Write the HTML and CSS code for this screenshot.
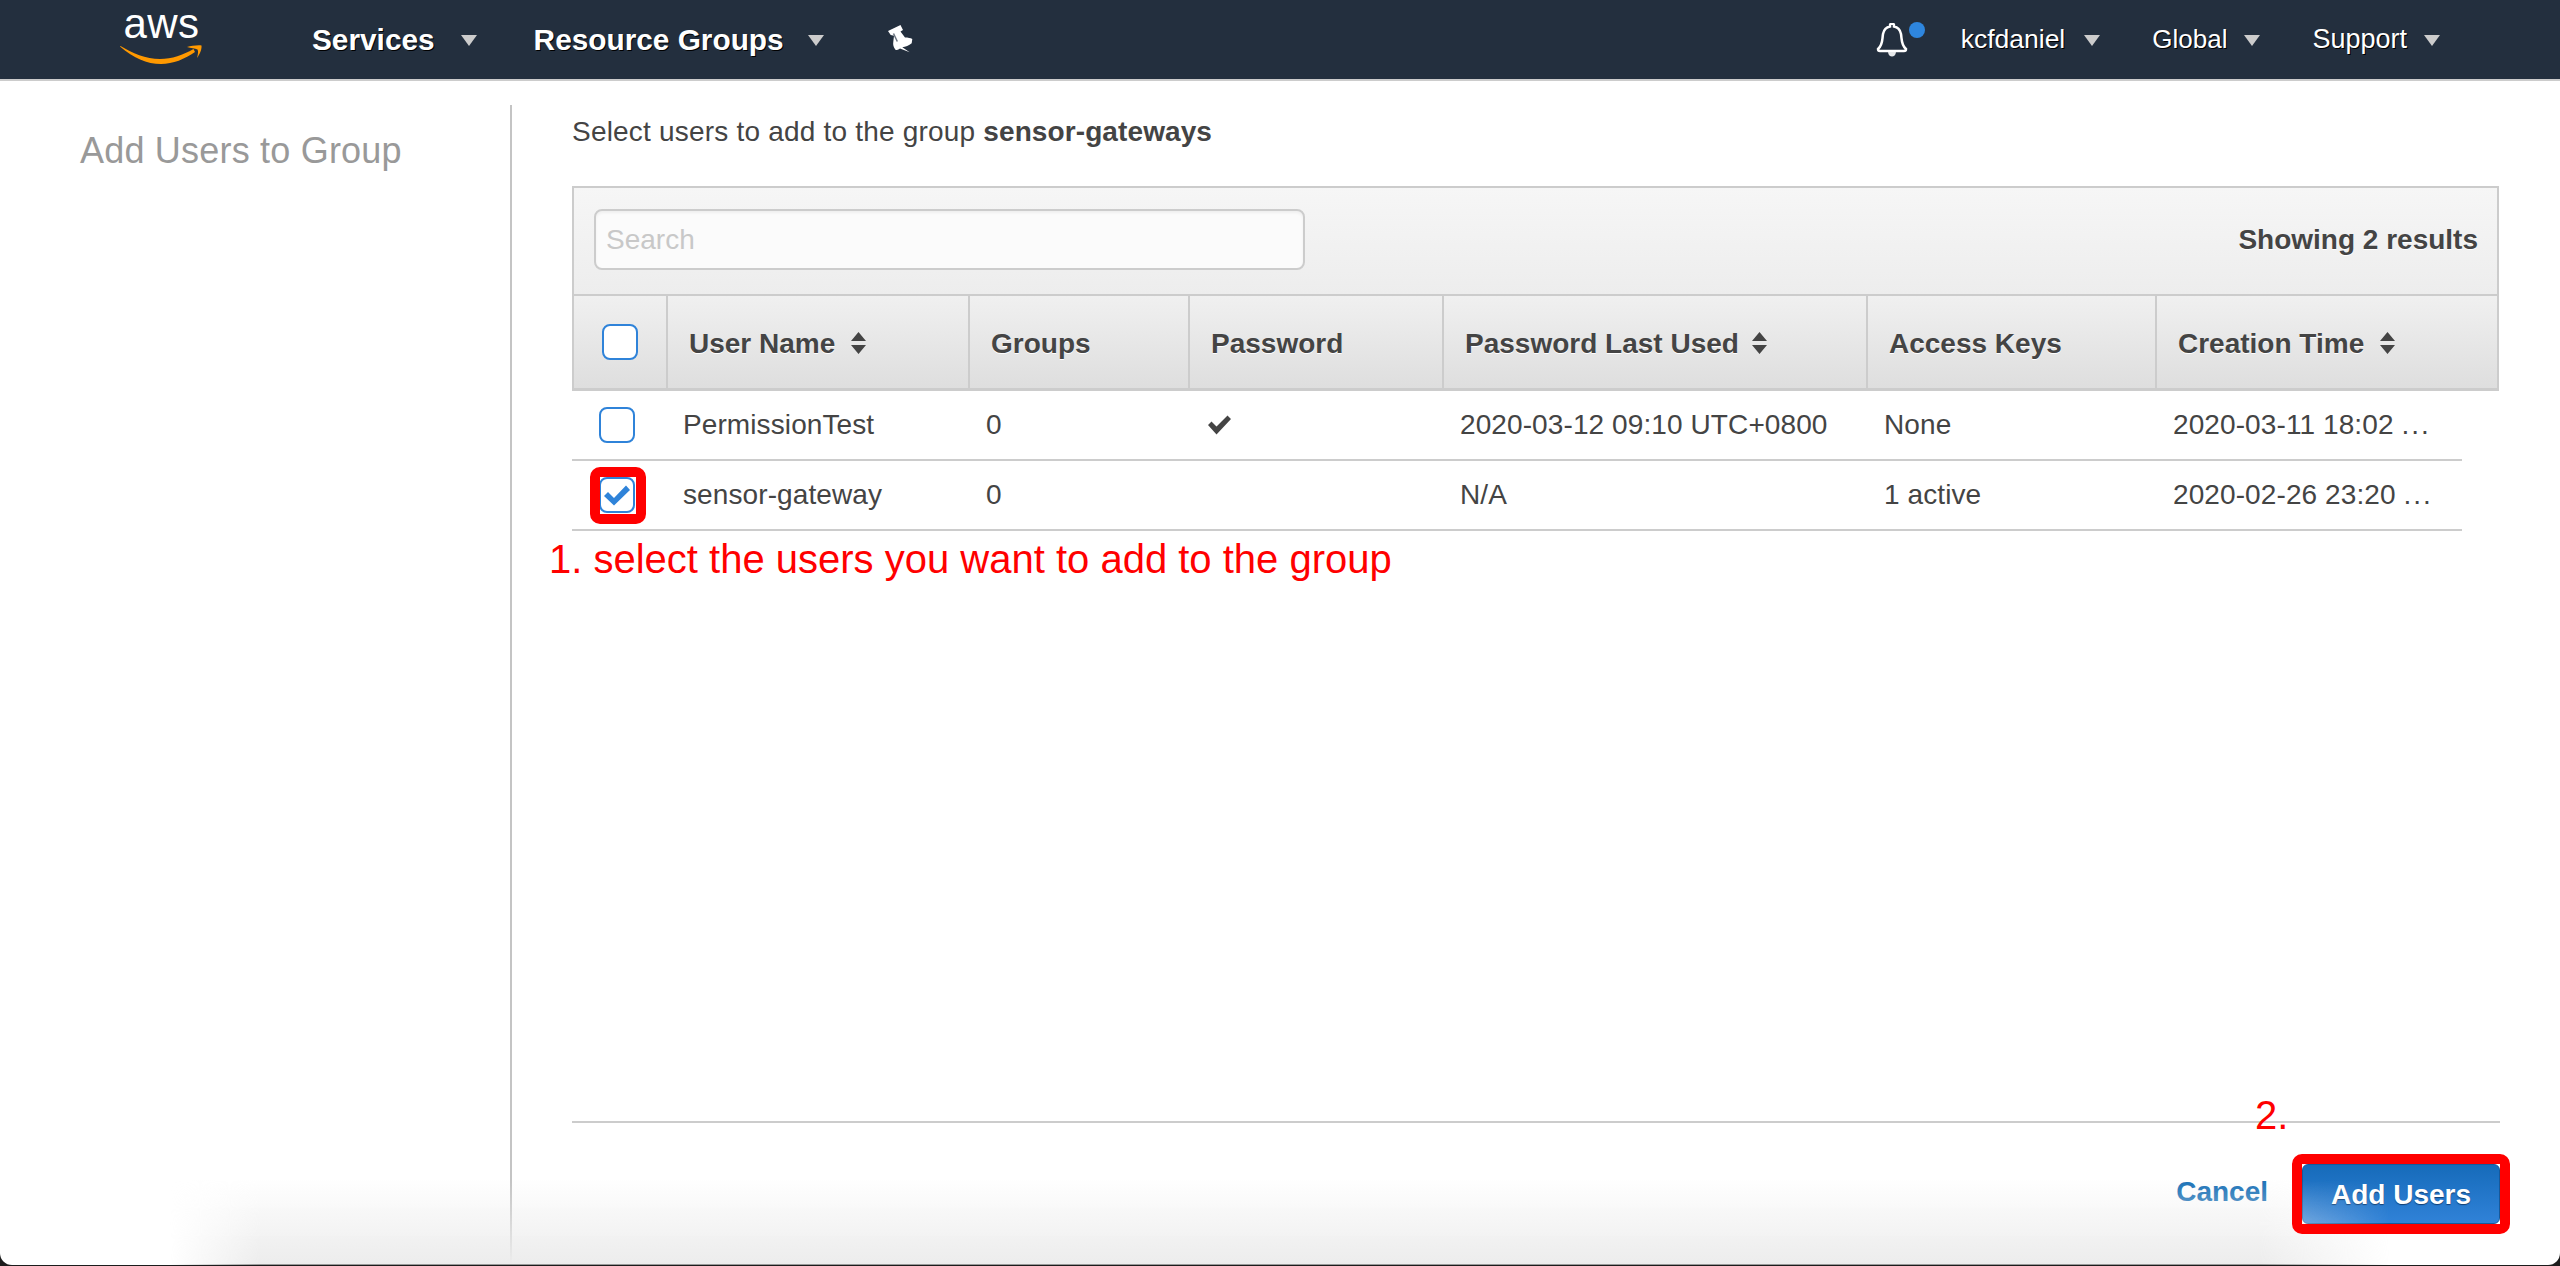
FILE: index.html
```html
<!DOCTYPE html>
<html lang="en">
<head>
<meta charset="utf-8">
<title>Add Users to Group</title>
<link rel="stylesheet" href="styles.css">
</head>
<body>
<div class="page">
  <header class="nav">
    <a class="logo">
      <svg class="logo-svg" width="95" height="70" viewBox="0 0 95 70">
        <text class="logo-text" x="46.500" y="36" text-anchor="middle">aws</text>
        <path d="M5 44.500 C18 56 32 62 46 62 C58 62 70 57 80 50 L78.500 47 C68 53 57 57 45 57 C31 57 17 51 5.500 44 Z" fill="#f90"/>
        <path d="M72 45 C76 44 82 43 86.500 43.500 C87 47 85 52 82 56 C83 52 83.500 49 82.500 47.500 C80 46.500 76 46 72 45Z" fill="#f90"/>
      </svg>
    </a>
    <a class="nav-item nav-bold services">Services<i class="caret"></i></a>
    <a class="nav-item nav-bold groups">Resource Groups<i class="caret"></i></a>
    <svg class="pin" width="30" height="32" viewBox="0 0 30 32">
      <path d="M4 9 L16.500 3 L19 8 L16.500 9.500 L21 15.500 C24 15.500 26.500 16 28.300 17 L27.700 21.300 C25 23.500 21.500 25 18.300 25.300 L25.700 30.300 L16 26.500 C14.500 27.500 13 28 11.700 28 C9.500 25.500 8.800 22.500 9.300 19.700 L10 13.700 L6.700 13 Z" fill="#fff"/>
      <path d="M9.500 11.500 L13.300 19.500" stroke="#6b7480" stroke-width="1.500" fill="none"/>
    </svg>
    <div class="nav-spacer"></div>
    <div class="bell">
      <svg width="32" height="35" viewBox="0 0 32 35">
        <path d="M2 26 C7 22 6 17 7 11 C8 6 11 4 14 3.500 L14 2 C14 0.500 18 0.500 18 2 L18 3.500 C21 4 24 6 25 11 C26 17 25 22 30 26 C30 27.500 29 28 28 28 L4 28 C3 28 2 27.500 2 26Z" fill="none" stroke="#fff" stroke-width="2.500"/>
        <path d="M12 29 C12.500 35 19.500 35 20 29Z" fill="#e6e8ea"/>
      </svg>
      <i class="bell-dot"></i>
    </div>
    <a class="nav-item user">kcfdaniel<i class="caret"></i></a>
    <a class="nav-item region">Global<i class="caret"></i></a>
    <a class="nav-item support">Support<i class="caret"></i></a>
  </header>

  <main class="main">
    <aside class="side">
      <h1 class="side-title">Add Users to Group</h1>
    </aside>
    <section class="content">
      <p class="lead">Select users to add to the group <b>sensor-gateways</b></p>

      <div class="grid-box">
        <div class="toolbar">
          <input class="search" type="text" placeholder="Search">
          <span class="count">Showing 2 results</span>
        </div>
        <div class="head-row">
          <div class="hc hc-check"><span class="box"></span></div>
          <div class="hc">User Name<svg class="sort" width="17" height="22" viewBox="0 0 17 22"><path d="M8.500 0 L16 9 L1 9Z M8.500 22 L16 13 L1 13Z"/></svg></div>
          <div class="hc">Groups</div>
          <div class="hc">Password</div>
          <div class="hc">Password Last Used<svg class="sort sort-tight" width="17" height="22" viewBox="0 0 17 22"><path d="M8.500 0 L16 9 L1 9Z M8.500 22 L16 13 L1 13Z"/></svg></div>
          <div class="hc">Access Keys</div>
          <div class="hc hc-last">Creation Time<svg class="sort" width="17" height="22" viewBox="0 0 17 22"><path d="M8.500 0 L16 9 L1 9Z M8.500 22 L16 13 L1 13Z"/></svg></div>
        </div>
      </div>

      <div class="rows">
        <div class="row">
          <div class="cell cell-check"><span class="box"></span></div>
          <div class="cell">PermissionTest</div>
          <div class="cell">0</div>
          <div class="cell"><svg class="tick" width="25" height="20" viewBox="0 0 25 20"><path d="M1 10 L4.500 6.500 L9.500 11.500 L20.500 0.500 L24 4 L9.500 19.500Z"/></svg></div>
          <div class="cell">2020-03-12 09:10 UTC+0800</div>
          <div class="cell">None</div>
          <div class="cell">2020-03-11 18:02 <span class="dots">...</span></div>
        </div>
        <div class="row">
          <div class="cell cell-check"><span class="box"><svg width="28" height="21" viewBox="0 0 28 21"><path d="M1 11 L5 7 L11 13 L23 0.500 L27 5 L11 20.500Z" fill="#2f83d9"/></svg></span></div>
          <div class="cell">sensor-gateway</div>
          <div class="cell">0</div>
          <div class="cell"></div>
          <div class="cell">N/A</div>
          <div class="cell">1 active</div>
          <div class="cell">2020-02-26 23:20 <span class="dots">...</span></div>
        </div>
      </div>

      <div class="fill"></div>

      <footer class="actions">
        <a class="cancel">Cancel</a>
        <button class="primary" type="button">Add Users</button>
      </footer>
    </section>
  </main>

  <div class="floor-shadow"></div>
  <div class="mark mark-check"></div>
  <div class="mark mark-button"></div>
  <div class="note note-one">1. select the users you want to add to the group</div>
  <div class="note note-two">2.</div>
</div>
</body>
</html>
```
FILE: styles.css
```css
* { box-sizing: border-box; }
html, body { margin: 0; padding: 0; height: 100%; }
body {
  background: #1c1c1c;
  font-family: "Liberation Sans", Arial, sans-serif;
  font-size: 28px;
  color: #444;
  overflow: hidden;
}
.page {
  position: relative;
  width: 2560px;
  height: 1265px;
  background: #fff;
  border-radius: 0 0 12px 12px;
  overflow: hidden;
  display: flex;
  flex-direction: column;
}

/* top bar */
.nav {
  height: 81px;
  flex: none;
  background: #232f3e;
  border-bottom: 2px solid #ccc;
  display: flex;
  align-items: center;
  color: #fff;
  padding-left: 115px;
}
.logo { display: flex; align-self: flex-start; margin-top: 2px; width: 95px; }
.logo-svg { overflow: visible; }
.logo-text {
  font-family: "Liberation Sans", Arial, sans-serif;
  font-size: 42px;
  fill: #fff;
  letter-spacing: 0.5px;
}
.nav-item {
  display: flex;
  align-items: center;
  text-shadow: 1px 1px 0 #000;
  white-space: nowrap;
}
.nav-bold { font-weight: 700; font-size: 29.8px; }
.caret {
  width: 0;
  height: 0;
  margin-left: 24px;
  border-left: 8.500px solid transparent;
  border-right: 8.500px solid transparent;
  border-top: 11px solid #ccc;
  margin-top: 2px;
}
.services { margin-left: 102px; }
.services .caret { margin-left: 26px; }
.groups { margin-left: 57px; }
.groups .caret { margin-left: 24px; }
.pin { margin-left: 60px; margin-top: -3px; }
.nav-spacer { flex: 1; }
.bell { position: relative; width: 50px; height: 35px; margin-top: 1px; }
.bell-dot {
  position: absolute;
  left: 33px;
  top: -1px;
  width: 16px;
  height: 16px;
  border-radius: 50%;
  background: #2e86de;
}
.user { margin-left: 35px; font-size: 26.500px; }
.region { margin-left: 52px; font-size: 26px; }
.support { margin-left: 52px; font-size: 27px; margin-right: 120px; }
.user .caret, .region .caret, .support .caret { margin-left: 17px; }
.user .caret { margin-left: 19px; }

/* layout */
.main { flex: 1; display: flex; min-height: 0; }
.side {
  width: 512px;
  flex: none;
  margin-top: 24px;
  padding: 25px 0 0 80px;
  border-right: 2px solid #c4c4c4;
}
.side-title {
  margin: 0;
  font-size: 36px;
  line-height: 42px;
  font-weight: 400;
  letter-spacing: 0.2px;
  color: #999;
}
.content {
  flex: 1;
  min-width: 0;
  padding: 0 60px 0 60px;
  display: flex;
  flex-direction: column;
}
.lead { margin: 0; padding-top: 34px; height: 105px; line-height: 34px; letter-spacing: 0.2px; }
.lead b { letter-spacing: 0.1px; }

/* grid */
.grid-box { border: 2px solid #ccc; border-bottom-width: 3px; width: 1927px; }
.toolbar {
  height: 108px;
  border-bottom: 2px solid #ccc;
  background: linear-gradient(#f6f6f6, #ededed);
  display: flex;
  align-items: center;
  justify-content: space-between;
  padding: 0 19px 4px 20px;
}
.search {
  width: 711px;
  height: 61px;
  padding: 2px 10px 0;
  border: 2px solid #ccc;
  border-radius: 8px;
  background: #fbfbfb;
  font: 28px "Liberation Sans", Arial, sans-serif;
  box-shadow: inset 0 2px 3px rgba(0, 0, 0, 0.05);
  outline: none;
}
.search::placeholder { color: #c8c8c8; opacity: 1; }
.count { font-weight: 700; text-shadow: 0 1px 0 #fff; margin-top: 1px; }
.head-row {
  display: grid;
  grid-template-columns: 94px 302px 220px 254px 424px 289px 1fr;
  height: 92px;
  background: linear-gradient(#f0f0f0, #dedede);
}
.hc {
  display: flex;
  align-items: center;
  gap: 15px;
  padding: 3px 0 0 21px;
  font-weight: 700;
  border-right: 2px solid #ccc;
  text-shadow: 0 1px 0 #fff;
  white-space: nowrap;
}
.hc-check { padding: 0 0 0 28px; }
.hc-last { border-right: 0; }
.sort { fill: #444; margin-top: -2px; }
.sort-tight { margin-left: -3px; }

.box {
  display: flex;
  align-items: center;
  justify-content: center;
  width: 36px;
  height: 36px;
  border: 2px solid #2f83d9;
  border-radius: 8px;
  background: #fff;
}
.rows { width: 1890px; }
.row {
  display: grid;
  grid-template-columns: 93px 303px 222px 252px 424px 289px 1fr;
  height: 70px;
  border-bottom: 2px solid #ccc;
  letter-spacing: 0.1px;
}
.cell {
  display: flex;
  align-items: center;
  padding-left: 18px;
  white-space: pre;
}
.cell-check { padding-left: 27px; }
.tick { fill: #444; margin-left: -1px; }
.dots { letter-spacing: 2px; }

.fill { flex: 1; }

/* footer */
.actions {
  height: 144px;
  border-top: 2px solid #ccc;
  display: flex;
  justify-content: flex-end;
  align-items: flex-start;
  gap: 34px;
  padding-top: 41px;
}
.cancel { font-weight: 700; color: #1a72b8; padding-top: 12px; line-height: 32px; }
.primary {
  width: 198px;
  height: 60px;
  padding-top: 3px;
  border: 1px solid #15599c;
  border-radius: 6px;
  background: linear-gradient(#166bba, #3082d8);
  color: #fff;
  font: 700 28px "Liberation Sans", Arial, sans-serif;
  text-shadow: 0 1px 1px #123f73;
}

/* screenshot overlays */
.floor-shadow {
  position: absolute;
  left: 170px;
  right: 170px;
  bottom: 0;
  height: 85px;
  background: linear-gradient(transparent, #ececec);
  border-bottom: 1px solid #999;
  -webkit-mask-image: linear-gradient(90deg, transparent, #000 90px, #000 calc(100% - 130px), transparent);
  mask-image: linear-gradient(90deg, transparent, #000 90px, #000 calc(100% - 130px), transparent);
  pointer-events: none;
}
.mark {
  position: absolute;
  border: 10px solid #f00;
  border-radius: 10px;
}
.mark-check { left: 590px; top: 467px; width: 56px; height: 57px; }
.mark-button { left: 2292px; top: 1154px; width: 218px; height: 80px; }
.note {
  position: absolute;
  color: #f00;
  font-size: 40px;
  line-height: 46px;
  white-space: nowrap;
}
.note-one { left: 549px; top: 536px; }
.note-two { left: 2255px; top: 1092px; }
```
